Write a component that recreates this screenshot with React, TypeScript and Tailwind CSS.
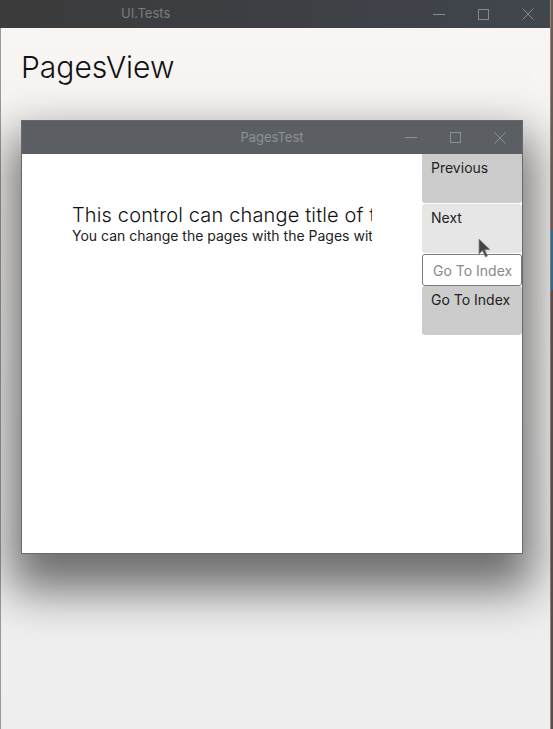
import React from "react"

const font = { fontFamily: "Inter, 'Noto Sans', sans-serif" }

function Caption({ title, dark }: { title: string; dark?: boolean }) {
  const stroke = dark ? "#7f8d8d" : "#8b9093"
  return (
    <div
      className={`relative flex items-center shrink-0 ${
        dark
          ? "h-[28px] bg-gradient-to-r from-[#3b3b3b] via-[#3d3f44] to-[#41464d]"
          : "h-[33px] bg-[#5b5f63]"
      }`}
    >
      <div
        className={`absolute text-[13px] ${dark ? "left-[121px] text-[#7c7c7c]" : "left-1/2 -translate-x-1/2 text-[#8d9194]"}`}
      >
        {title}
      </div>
      <div className="ml-auto flex items-center gap-[33px] pr-[16px]">
        <div className="h-px w-[12px]" style={{ background: stroke }} />
        <div className="h-[11px] w-[11px] border" style={{ borderColor: stroke }} />
        <svg width="12" height="12" viewBox="0 0 12 12">
          <path d="M0.5 0.5 L11.5 11.5 M11.5 0.5 L0.5 11.5" stroke={stroke} strokeWidth="1" />
        </svg>
      </div>
    </div>
  )
}

export default function App() {
  return (
    <div className="flex h-[729px] w-[553px] overflow-hidden" style={font}>
      {/* UI.Tests window */}
      <div className="flex w-[551px] flex-col border-r border-[#8a8a8a]">
        <Caption title="UI.Tests" dark />
        <div className="flex flex-1 flex-col border-l border-[#9a9a9a] bg-gradient-to-b from-[#f8f5f3] via-[#f2f1f0] to-[#eeeeee] pl-[20px]">
          <h1 className="mt-[19px] text-[30px] font-light leading-[40px] text-[#111]">PagesView</h1>

          {/* PagesTest window */}
          <div className="mt-[33px] flex h-[434px] w-[502px] flex-col border border-[#666a6d] shadow-[0_26px_44px_10px_rgba(0,0,0,0.55)]">
            <Caption title="PagesTest" />
            <div className="relative flex flex-1 bg-white">
              <div className="ml-[50px] mt-[49px] w-[300px] overflow-hidden whitespace-nowrap text-[#1a1a1a]">
                <div className="text-[20px] font-light leading-[24px] tracking-[0.15px] text-[#111]">
                  This control can change title of the window
                </div>
                <div className="text-[14px] leading-[18px] text-[#222]">
                  You can change the pages with the Pages with the buttons on the right
                </div>
              </div>
              <div className="ml-auto flex w-[100px] flex-col whitespace-nowrap text-[14px] text-[#222]">
                <div className="h-[49px] rounded-b-[3px] bg-[#cccccc] px-[9px] pt-[3px]">Previous</div>
                <div className="mt-px h-[49px] rounded-[3px] bg-[#e6e6e6] px-[9px] pt-[3px]">Next</div>
                <div className="mt-px flex h-[32px] items-center overflow-hidden rounded-[3px] border border-[#7a7a7a] bg-white px-[10px] text-[#8a8a8a]">
                  Go To Index
                </div>
                <div className="h-[49px] rounded-[3px] bg-[#cccccc] px-[9px] pt-[3px]">Go To Index</div>
              </div>
              {/* mouse pointer */}
              <svg width="14" height="21" viewBox="0 0 14 21" className="absolute left-[456px] top-[84px]">
                <path
                  d="M1 1 L1 16 L4.5 12.5 L7.5 19 L9.5 18 L6.7 11.7 L12 11.7 Z"
                  fill="#444"
                  stroke="#888"
                  strokeWidth="0.8"
                />
              </svg>
            </div>
          </div>
        </div>
      </div>
      <div className="flex w-[2px] flex-col">
        <div className="h-[230px] bg-[#6d5a50]" />
        <div className="h-[60px] bg-[#2f6c8c]" />
        <div className="flex-1 bg-[#5e4c44]" />
      </div>
    </div>
  )
}
